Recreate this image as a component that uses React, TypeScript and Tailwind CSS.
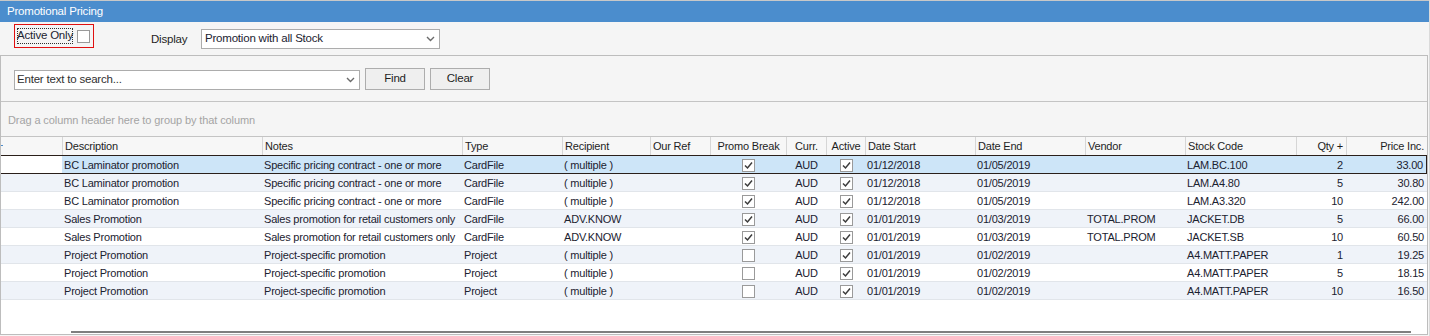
import { ReactNode } from "react";

type Col = {
  key: string;
  label: string;
  w: string;
  align: "left" | "center" | "right";
};

const cols: Col[] = [
  { key: "desc", label: "Description", w: "w-[200px]", align: "left" },
  { key: "notes", label: "Notes", w: "w-[200px]", align: "left" },
  { key: "type", label: "Type", w: "w-[100px]", align: "left" },
  { key: "recip", label: "Recipient", w: "w-[88px]", align: "left" },
  { key: "ref", label: "Our Ref", w: "w-[60px]", align: "left" },
  { key: "promo", label: "Promo Break", w: "w-[76px]", align: "center" },
  { key: "curr", label: "Curr.", w: "w-[40px]", align: "center" },
  { key: "active", label: "Active", w: "w-[39px]", align: "center" },
  { key: "start", label: "Date Start", w: "w-[110px]", align: "left" },
  { key: "end", label: "Date End", w: "w-[110px]", align: "left" },
  { key: "vendor", label: "Vendor", w: "w-[100px]", align: "left" },
  { key: "stock", label: "Stock Code", w: "w-[111px]", align: "left" },
  { key: "qty", label: "Qty +", w: "w-[50px]", align: "right" },
  { key: "price", label: "Price Inc.", w: "w-[80px]", align: "right" },
];

type Row = {
  desc: string;
  notes: string;
  type: string;
  recip: string;
  promo: boolean;
  start: string;
  end: string;
  vendor: string;
  stock: string;
  qty: string;
  price: string;
};

const laminator = {
  desc: "BC Laminator promotion",
  notes: "Specific pricing contract - one or more",
  type: "CardFile",
  recip: "( multiple )",
  promo: true,
  start: "01/12/2018",
  end: "01/05/2019",
  vendor: "",
};
const sales = {
  desc: "Sales Promotion",
  notes: "Sales promotion for retail customers only",
  type: "CardFile",
  recip: "ADV.KNOW",
  promo: true,
  start: "01/01/2019",
  end: "01/03/2019",
  vendor: "TOTAL.PROM",
};
const project = {
  desc: "Project Promotion",
  notes: "Project-specific promotion",
  type: "Project",
  recip: "( multiple )",
  promo: false,
  start: "01/01/2019",
  end: "01/02/2019",
  vendor: "",
};

const rows: Row[] = [
  { ...laminator, stock: "LAM.BC.100", qty: "2", price: "33.00" },
  { ...laminator, stock: "LAM.A4.80", qty: "5", price: "30.80" },
  { ...laminator, stock: "LAM.A3.320", qty: "10", price: "242.00" },
  { ...sales, stock: "JACKET.DB", qty: "5", price: "66.00" },
  { ...sales, stock: "JACKET.SB", qty: "10", price: "60.50" },
  { ...project, stock: "A4.MATT.PAPER", qty: "1", price: "19.25" },
  { ...project, stock: "A4.MATT.PAPER", qty: "5", price: "18.15" },
  { ...project, stock: "A4.MATT.PAPER", qty: "10", price: "16.50" },
];

const Chevron = () => (
  <svg width="9" height="6" viewBox="0 0 9 6" className="shrink-0">
    <polyline points="1,1 4.5,4.5 8,1" fill="none" stroke="#6b6b6b" strokeWidth="1.4" />
  </svg>
);

const Check = ({ on }: { on: boolean }) => (
  <span className="w-[13px] h-[13px] border border-[#9a9a9a] bg-white flex items-center justify-center">
    {on && (
      <svg width="11" height="11" viewBox="0 0 11 11">
        <polyline points="2,5.5 4.5,8 9,2.5" fill="none" stroke="#3c3c3c" strokeWidth="1.5" />
      </svg>
    )}
  </span>
);

const alignCls = (a: Col["align"]) =>
  a === "left" ? "justify-start pl-[2px]" : a === "center" ? "justify-center" : "justify-end pr-[3px]";

const cellValue = (r: Row, key: string): ReactNode => {
  switch (key) {
    case "promo":
      return <Check on={r.promo} />;
    case "active":
      return <Check on />;
    case "curr":
      return "AUD";
    case "ref":
      return "";
    default:
      return (r as unknown as Record<string, string>)[key];
  }
};

const Button = ({ children }: { children: ReactNode }) => (
  <button className="w-[60px] h-[22px] border border-[#adadad] bg-[#efefef] text-[#1e1e1e] text-[11.5px] flex items-center justify-center">
    {children}
  </button>
);

export default function App() {
  return (
    <div className="w-[1430px] h-[336px] bg-[#f5f5f5] border-r border-[#dadada] font-['Liberation_Sans',Arial,sans-serif] text-[11px] tracking-[-0.2px] text-[#1b2230] overflow-hidden">
      {/* title */}
      <div className="h-[22px] border-t border-[#c8c8c8] bg-[#4b8dcd] text-white text-[11.5px] flex items-center pl-[7px]">
        Promotional Pricing
      </div>

      {/* filter bar */}
      <div className="h-[33px] flex items-start pl-[14px]">
        <div className="mt-[2px] w-[80px] h-[24px] border border-[#e01010] flex items-center">
          <span className="ml-[2px] h-[16px] w-[56px] border border-dotted border-[#303030] text-[11.5px] flex items-center justify-center whitespace-nowrap leading-none">
            Active Only
          </span>
          <span className="ml-[4px]">
            <span className="w-[13px] h-[13px] border border-[#9a9a9a] bg-white block" />
          </span>
        </div>
        <span className="ml-[57px] mt-[10px] w-[50px] text-[11.5px] leading-[14px] text-[#1e1e1e]">Display</span>
        <div className="mt-[7px] w-[239px] h-[20px] border border-[#acacac] bg-white flex items-center justify-between pl-[3px] pr-[4px] text-[11.5px]">
          <span>Promotion with all Stock</span>
          <Chevron />
        </div>
      </div>

      {/* main panel */}
      <div className="w-[1428px] border border-[#bdbdbd] bg-white">
        <div className="h-[46px] bg-[#f5f5f5] flex items-start pl-[13px] border-b border-[#c4c4c4]">
          <div className="mt-[14px] w-[346px] h-[20px] border border-[#acacac] bg-white flex items-center justify-between pl-[2px] pr-[4px] text-[11.5px] text-[#303030]">
            <span>Enter text to search...</span>
            <Chevron />
          </div>
          <div className="mt-[12px] ml-[5px] flex gap-[5px]">
            <Button>Find</Button>
            <Button>Clear</Button>
          </div>
        </div>

        <div className="h-[35px] bg-[#f5f5f5] flex items-center pl-[7px] pt-[2px] text-[#a4a4a4] tracking-[-0.1px] border-b border-[#c4c4c4]">
          Drag a column header here to group by that column
        </div>

        {/* header */}
        <div className="h-[18px] flex bg-[#f7f7f7] text-[#1e1e1e]">
          <div className="w-[61px] relative">
            <span className="absolute left-0 top-[8px] w-[2px] h-[1px] bg-[#4b8dcd]" />
          </div>
          {cols.map((c, i) => (
            <div
              key={c.key}
              className={`${c.w} ${i === cols.length - 1 ? "w-[81px]" : ""} border-l border-[#d6d6d6] pt-[1px] flex items-center whitespace-nowrap ${alignCls(c.align)}`}
            >
              {c.label}
            </div>
          ))}
        </div>

        {/* rows */}
        {rows.map((r, ri) => {
          const sel = ri === 0;
          const bg = ri % 2 === 1 ? "bg-[#eff3f9]" : "bg-white";
          return (
            <div
              key={ri}
              className={`flex ${sel ? "h-[19px] border-y border-[#2a1f1a]" : `h-[18px] border-b border-[#e1e5ea] ${bg}`}`}
            >
              <div className={`w-[61px] ${sel ? "bg-white" : ""}`} />
              <div className={`flex ${sel ? "bg-[#cde5f8] border-r border-[#2a1f1a]" : ""}`}>
                {cols.map((c, ci) => (
                  <div
                    key={c.key}
                    className={`${c.w} ${ci === cols.length - 1 ? (sel ? "w-[80px]" : "w-[81px]") : ""} pl-[1px] pt-[1px] flex items-center whitespace-nowrap overflow-hidden ${alignCls(c.align)}`}
                  >
                    {cellValue(r, c.key)}
                  </div>
                ))}
              </div>
            </div>
          );
        })}

        <div className="h-[34px] pt-[31px]">
          <div className="ml-[70px] w-[1340px] h-[2px] bg-[#7f7f7f]" />
        </div>
      </div>
    </div>
  );
}
